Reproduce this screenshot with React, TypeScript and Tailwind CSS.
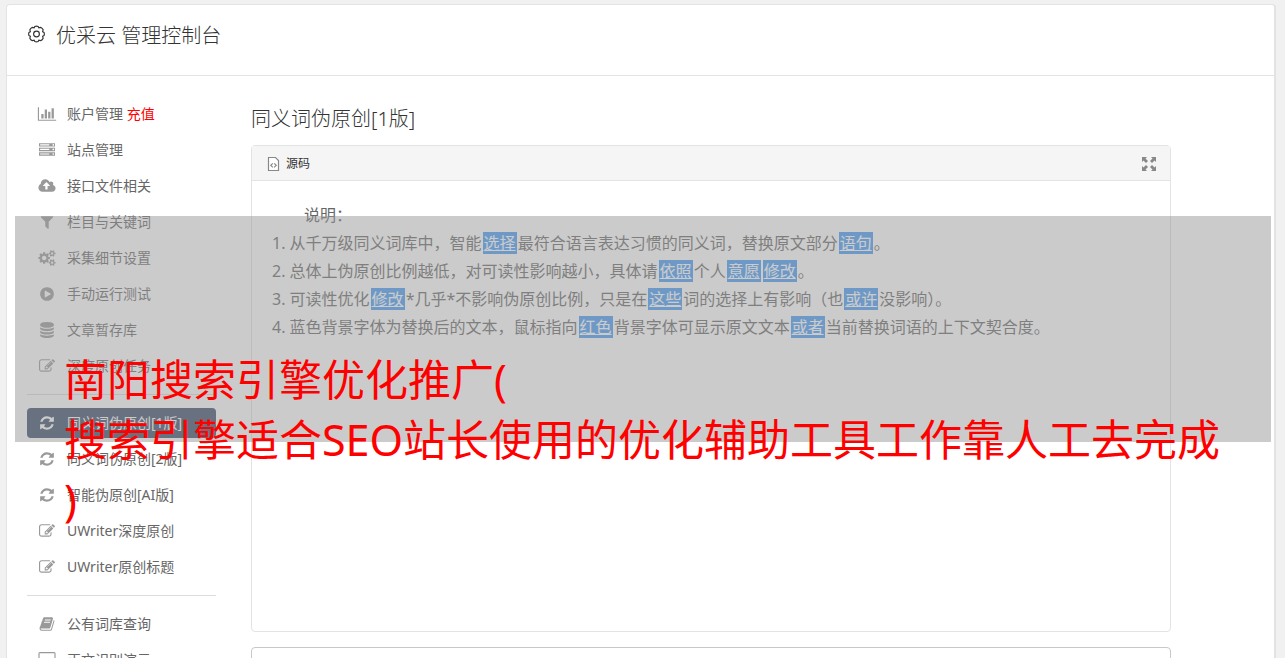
import type { ReactNode } from "react";

type Glyph = { w: number; d: string };

const GLYPHS: Record<string, Glyph> = {
  chart: { w: 2048, d: "M640 896v512h-256v-512h256zm384-512v1024h-256v-1024h256zm1024 1152v128h-2048v-1536h128v1408h1920zm-640-896v768h-256v-768h256zm384-384v1152h-256v-1152h256z" },
  server: { w: 1792, d: "M128 1408h1024v-128h-1024v128zm0-512h1024v-128h-1024v128zm1568 448q0-40-28-68t-68-28-68 28-28 68 28 68 68 28 68-28 28-68zm-1568-960h1024v-128h-1024v128zm1568 448q0-40-28-68t-68-28-68 28-28 68 28 68 68 28 68-28 28-68zm0-512q0-40-28-68t-68-28-68 28-28 68 28 68 68 28 68-28 28-68zm96 832v384h-1792v-384h1792zm0-512v384h-1792v-384h1792zm0-512v384h-1792v-384h1792z" },
  upload: { w: 1920, d: "M1280 864q0-14-9-23l-352-352q-9-9-23-9t-23 9l-351 351q-10 12-10 24 0 14 9 23t23 9h224v352q0 13 9.5 22.5t22.5 9.5h192q13 0 22.5-9.5t9.5-22.5v-352h224q13 0 22.5-9.5t9.5-22.5zm640 288q0 159-112.5 271.5t-271.5 112.5h-1088q-185 0-316.5-131.5t-131.5-316.5q0-130 70-240t188-165q-2-30-2-43 0-212 150-362t362-150q156 0 285.5 87t188.5 231q71-62 166-62 106 0 181 75t75 181q0 76-41 138 130 31 213.5 135.5t83.5 238.5z" },
  filter: { w: 1792, d: "M1595 295q17 41-14 70l-493 493v742q0 42-39 59-13 5-25 5-27 0-45-19l-256-256q-19-19-19-45v-486l-493-493q-31-29-14-70 17-39 59-39h1280q42 0 59 39z" },
  cogs: { w: 1920, d: "M896 896q0-106-75-181t-181-75-181 75-75 181 75 181 181 75 181-75 75-181zm768 512q0-52-38-90t-90-38-90 38-38 90q0 53 37.5 90.5t90.5 37.5 90.5-37.5 37.5-90.5zm0-1024q0-52-38-90t-90-38-90 38-38 90q0 53 37.5 90.5t90.5 37.5 90.5-37.5 37.5-90.5zm-384 421v185q0 10-7 19.5t-16 10.5l-155 24q-11 35-32 76 34 48 90 115 7 11 7 20 0 12-7 19-23 30-82.5 89.5t-78.5 59.5q-11 0-21-7l-115-90q-37 19-77 31-11 108-23 155-7 24-30 24h-186q-11 0-20-7.5t-10-17.5l-23-153q-34-10-75-31l-118 89q-7 7-20 7-11 0-21-8-144-133-144-160 0-9 7-19 10-14 41-53t47-61q-23-44-35-82l-152-24q-10-1-17-9.5t-7-19.5v-185q0-10 7-19.5t16-10.5l155-24q11-35 32-76-34-48-90-115-7-11-7-20 0-12 7-20 22-30 82-89t79-59q11 0 21 7l115 90q34-18 77-32 11-108 23-154 7-24 30-24h186q11 0 20 7.5t10 17.5l23 153q34 10 75 31l118-89q8-7 20-7 11 0 21 8 144 133 144 160 0 8-7 19-12 16-42 54t-45 60q23 48 34 82l152 23q10 2 17 10.5t7 19.5zm640 533v140q0 16-149 31-12 27-30 52 51 113 51 138 0 4-4 7-122 71-124 71-8 0-46-47t-52-68q-20 2-30 2t-30-2q-14 21-52 68t-46 47q-2 0-124-71-4-3-4-7 0-25 51-138-18-25-30-52-149-15-149-31v-140q0-16 149-31 13-29 30-52-51-113-51-138 0-4 4-7 4-2 35-20t59-34 30-16q8 0 46 46.5t52 67.5q20-2 30-2t30 2q51-71 92-112l6-2q4 0 124 70 4 3 4 7 0 25-51 138 17 23 30 52 149 15 149 31zm0-1024v140q0 16-149 31-12 27-30 52 51 113 51 138 0 4-4 7-122 71-124 71-8 0-46-47t-52-68q-20 2-30 2t-30-2q-14 21-52 68t-46 47q-2 0-124-71-4-3-4-7 0-25 51-138-18-25-30-52-149-15-149-31v-140q0-16 149-31 13-29 30-52-51-113-51-138 0-4 4-7 4-2 35-20t59-34 30-16q8 0 46 46.5t52 67.5q20-2 30-2t30 2q51-71 92-112l6-2q4 0 124 70 4 3 4 7 0 25-51 138 17 23 30 52 149 15 149 31z" },
  play: { w: 1792, d: "M896 128q209 0 385.5 103t279.5 279.5 103 385.5-103 385.5-279.5 279.5-385.5 103-385.5-103-279.5-279.5-103-385.5 103-385.5 279.5-279.5 385.5-103zm384 823q32-18 32-55t-32-55l-544-320q-31-19-64-1-32 19-32 56v640q0 37 32 56 16 8 32 8 17 0 32-9z" },
  database: { w: 1792, d: "M896 768q237 0 443-43t325-127v170q0 69-103 128t-280 93.5-385 34.5-385-34.5-280-93.5-103-128v-170q119 84 325 127t443 43zm0 768q237 0 443-43t325-127v170q0 69-103 128t-280 93.5-385 34.5-385-34.5-280-93.5-103-128v-170q119 84 325 127t443 43zm0-384q237 0 443-43t325-127v170q0 69-103 128t-280 93.5-385 34.5-385-34.5-280-93.5-103-128v-170q119 84 325 127t443 43zm0-1152q208 0 385 34.5t280 93.5 103 128v128q0 69-103 128t-280 93.5-385 34.5-385-34.5-280-93.5-103-128v-128q0-69 103-128t280-93.5 385-34.5z" },
  edit: { w: 1792, d: "M888 1184l116-116-152-152-116 116v56h96v96h56zm440-720q-16-16-33 1l-350 350q-17 17-1 33t33-1l350-350q17-17 1-33zm80 594v190q0 119-84.5 203.5t-203.5 84.5h-832q-119 0-203.5-84.5t-84.5-203.5v-832q0-119 84.5-203.5t203.5-84.5h832q63 0 117 25 15 7 18 23 3 17-9 29l-49 49q-14 14-32 8-23-6-45-6h-832q-66 0-113 47t-47 113v832q0 66 47 113t113 47h832q66 0 113-47t47-113v-126q0-13 9-22l64-64q15-15 35-7t20 29zm-96-738l288 288-672 672h-288v-288zm444 132l-92 92-288-288 92-92q28-28 68-28t68 28l152 152q28 28 28 68t-28 68z" },
  refresh: { w: 1792, d: "M1639 1056q0 5-1 7-64 268-268 434.5t-478 166.5q-146 0-282.5-55t-243.5-157l-129 129q-19 19-45 19t-45-19-19-45v-448q0-26 19-45t45-19h448q26 0 45 19t19 45-19 45l-137 137q71 66 161 102t187 36q134 0 250-65t186-179q11-17 53-117 8-23 30-23h192q13 0 22.5 9.5t9.5 22.5zm25-800v448q0 26-19 45t-45 19h-448q-26 0-45-19t-19-45 19-45l138-138q-148-137-349-137-134 0-250 65t-186 179q-11 17-53 117-8 23-30 23h-199q-13 0-22.5-9.5t-9.5-22.5v-7q65-268 270-434.5t480-166.5q146 0 284 55.5t245 156.5l130-129q19-19 45-19t45 19 19 45z" },
  book: { w: 1664, d: "M1639 478q40 57 18 129l-275 906q-19 64-76.5 107.5t-122.5 43.5h-923q-77 0-148.5-53.5t-99.5-131.5q-24-67-2-127 0-4 3-27t4-37q1-8-3-21.5t-3-19.5q2-11 8-21t16.5-23.5 16.5-23.5q23-38 45-91.5t30-91.5q3-10 .5-30t-.5-28q3-11 17-28t17-23q21-36 42-92t25-90q1-9-2.5-32t.5-28q4-13 22-30.5t22-22.5q19-26 42.5-84.5t27.5-96.5q1-8-3-25.5t-2-26.5q2-8 9-18t18-23 17-21q8-12 16.5-30.5t15-35 16-36 19.5-32 26.5-23.5 36-11.5 47.5 5.5l-1 3q38-9 51-9h761q74 0 114 56t18 130l-274 906q-36 119-71.5 153.5t-128.5 34.5h-869q-27 0-38 15-11 16-1 43 24 70 144 70h923q29 0 56-15.5t35-41.5l300-987q7-22 5-57 38 15 59 43zm-1064 2q-4 13 2 22.5t20 9.5h608q13 0 25.5-9.5t16.5-22.5l21-64q4-13-2-22.5t-20-9.5h-608q-13 0-25.5 9.5t-16.5 22.5zm-83 256q-4 13 2 22.5t20 9.5h608q13 0 25.5-9.5t16.5-22.5l21-64q4-13-2-22.5t-20-9.5h-608q-13 0-25.5 9.5t-16.5 22.5z" },
  screen: { w: 1920, d: "M1792 992v-832q0-13-9.5-22.5t-22.5-9.5h-1600q-13 0-22.5 9.5t-9.5 22.5v832q0 13 9.5 22.5t22.5 9.5h1600q13 0 22.5-9.5t9.5-22.5zm128-832v1088q0 66-47 113t-113 47h-544q0 37 16 77.5t32 71 16 43.5q0 26-19 45t-45 19h-512q-26 0-45-19t-19-45q0-14 16-44t32-70 16-78h-544q-66 0-113-47t-47-113v-1088q0-66 47-113t113-47h1600q66 0 113 47t47 113z" },
};

function Icon({ name }: { name: string }) {
  const g = GLYPHS[name];
  return (
    <svg className="h-4 w-5 shrink-0" viewBox={`0 0 ${g.w} 1792`} fill="currentColor" aria-hidden="true">
      <path d={g.d} />
    </svg>
  );
}

type Item = { icon: string; label: string; extra?: string; active?: boolean };

const GROUPS: Item[][] = [
  [
    { icon: "chart", label: "账户管理", extra: "充值" },
    { icon: "server", label: "站点管理" },
    { icon: "upload", label: "接口文件相关" },
    { icon: "filter", label: "栏目与关键词" },
    { icon: "cogs", label: "采集细节设置" },
    { icon: "play", label: "手动运行测试" },
    { icon: "database", label: "文章暂存库" },
    { icon: "edit", label: "深度原创任务" },
  ],
  [
    { icon: "refresh", label: "同义词伪原创[1版]", active: true },
    { icon: "refresh", label: "同义词伪原创[2版]" },
    { icon: "refresh", label: "智能伪原创[AI版]" },
    { icon: "edit", label: "UWriter深度原创" },
    { icon: "edit", label: "UWriter原创标题" },
  ],
  [
    { icon: "book", label: "公有词库查询" },
    { icon: "screen", label: "正文识别演示" },
  ],
];

function NavItem({ item }: { item: Item }) {
  return (
    <li>
      <a
        href="#"
        className={
          item.active
            ? "flex h-[30px] items-center gap-2.5 rounded bg-[#394b67] px-2.5 text-white"
            : "flex h-[30px] items-center gap-2.5 rounded px-2.5 text-[#999]"
        }
      >
        <Icon name={item.icon} />
        <span className={item.active ? "whitespace-nowrap text-white" : "whitespace-nowrap text-[#666]"}>
          {item.label}
          {item.extra && <span className="text-[#ff0000]"> {item.extra}</span>}
        </span>
      </a>
    </li>
  );
}

function Word({ children }: { children: ReactNode }) {
  return (
    <a href="#" className="mx-px bg-[#459bf7] px-px text-white underline">
      {children}
    </a>
  );
}

export default function App() {
  return (
    <div className="relative h-screen overflow-hidden bg-[#f1f1f1] pt-1 pr-[9px] pl-1.5 font-['Noto_Sans','Noto_Sans_CJK_SC',sans-serif] text-sm text-[#333]">
      <main className="min-h-full rounded-t border border-r-2 border-[#e3e3e3] bg-white">
        <header className="flex h-[71px] items-start gap-2.5 border-b border-[#e3e3e3] px-5 pt-4">
          <svg className="mt-1 h-[18px] w-[19px]" viewBox="0 0 20 20" fill="none" stroke="#333" strokeWidth="1.3" aria-hidden="true">
            <path d="M8.2 1.6Q10 .9 11.8 1.6L12.6 3.2 14.6 2.6Q16.500 3.500 17.400 5.400L16.800 7.400 18.400 8.200Q19.100 10 18.400 11.800L16.800 12.600 17.400 14.600Q16.500 16.500 14.600 17.400L12.600 16.800 11.800 18.400Q10 19.100 8.200 18.400L7.400 16.800 5.400 17.400Q3.500 16.500 2.600 14.600L3.200 12.600 1.600 11.800Q.9 10 1.600 8.200L3.200 7.400 2.600 5.400Q3.500 3.500 5.400 2.600L7.400 3.200Z" />
            <circle cx="10" cy="10" r="3.2" />
          </svg>
          <h1 className="text-xl leading-[30px] font-light">优采云 管理控制台</h1>
        </header>

        <div className="flex pl-5">
          <nav className="w-[189px] shrink-0 pt-[23px]" aria-label="管理菜单">
            {GROUPS.map((group, i) => (
              <ul
                key={i}
                className={
                  i > 0
                    ? "mt-[13px] flex flex-col gap-1.5 border-t border-[#dcdcdc] pt-[13px]"
                    : "flex flex-col gap-1.5"
                }
              >
                {group.map((item) => (
                  <NavItem key={item.label} item={item} />
                ))}
              </ul>
            ))}
          </nav>

          <section className="mr-[103px] ml-[35px] min-w-0 flex-1 pt-7">
            <h2 className="text-xl leading-[30px] font-light">同义词伪原创[1版]</h2>
            <div className="mt-[11px] flex h-[487px] flex-col rounded border border-[#e3e3e3]">
              <div className="flex h-[35px] shrink-0 items-center justify-between border-b border-[#e3e3e3] bg-[#f5f5f5] pt-0.5 pr-[13px] pl-3.5">
                <button type="button" className="flex items-center gap-1 text-xs">
                  <svg className="size-4" viewBox="0 0 16 16" fill="none" stroke="#888" aria-hidden="true">
                    <path d="M2.5 1.5H9.5L12.5 4.5V14.5H2.5Z" fill="#fff" strokeWidth="1.2" />
                    <path d="M6.8 7.300L4.800 9.300L6.800 11.300M8.200 7.300L10.200 9.300L8.200 11.300" strokeWidth="1.2" />
                  </svg>
                  源码
                </button>
                <button type="button" aria-label="全屏">
                  <svg className="size-4" viewBox="0 0 16 16" fill="#888" aria-hidden="true">
                    <path d="M1 1h5L4.500 2.500 7 5 5 7 2.500 4.500 1 6zM15 1v5L13.500 4.500 11 7 9 5 11.500 2.500 10 1zM1 15v-5l1.500 1.500L5 9l2 2-2.500 2.500L6 15zM15 15h-5l1.500-1.500L9 11l2-2 2.500 2.500L15 10z" />
                  </svg>
                </button>
              </div>
              <div className="px-5 pt-5 text-base leading-7 text-[#666]">
                <p className="indent-8">说明：</p>
                <ol className="whitespace-nowrap">
                  <li>1. 从千万级同义词库中，智能<Word>选择</Word>最符合语言表达习惯的同义词，替换原文部分<Word>语句</Word>。</li>
                  <li>2. 总体上伪原创比例越低，对可读性影响越小，具体请<Word>依照</Word>个人<Word>意愿</Word><Word>修改</Word>。</li>
                  <li>3. 可读性优化<Word>修改</Word>*几乎*不影响伪原创比例，只是在<Word>这些</Word>词的选择上有影响（也<Word>或许</Word>没影响）。</li>
                  <li>4. 蓝色背景字体为替换后的文本，鼠标指向<Word>红色</Word>背景字体可显示原文文本<Word>或者</Word>当前替换词语的上下文契合度。</li>
                </ol>
              </div>
            </div>
            <textarea aria-label="文本" className="mt-[15px] block h-24 w-full resize-none rounded border border-[#c8c8c8] bg-white" />
          </section>
        </div>
      </main>

      <div className="pointer-events-none absolute top-[216px] right-3.5 left-[15px] h-[226px] bg-[#979797]/50" />
      <p className="pointer-events-none absolute top-[350px] right-[50px] left-16 text-[43px] leading-[60px] text-[#ff0000]">
        南阳搜索引擎优化推广(
        <br />
        搜索引擎适合SEO站长使用的优化辅助工具工作靠人工去完成
        <br />)
      </p>
    </div>
  );
}
